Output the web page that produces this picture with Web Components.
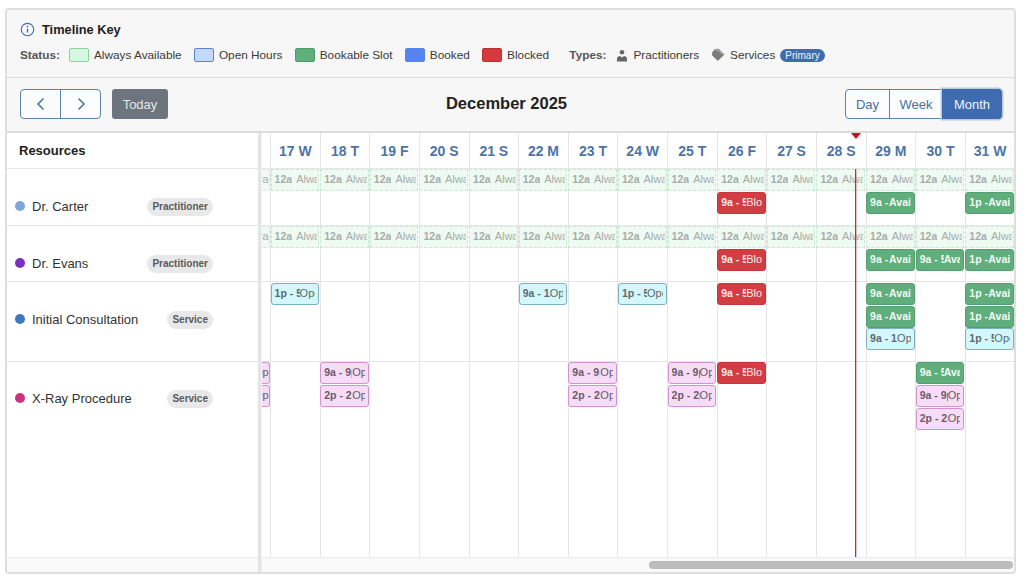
<!DOCTYPE html>
<html lang="en">
<head>
<meta charset="utf-8">
<title>Timeline</title>
<style>
  html, body { margin: 0; height: 100%; background: #fff; overflow: hidden; }
  body { font-family: "Liberation Sans", Arial, sans-serif; color: #2b2b2b; }
</style>
</head>
<body>
<timeline-card>
  <timeline-key></timeline-key>
  <cal-toolbar title="December 2025"></cal-toolbar>
  <resource-grid></resource-grid>
</timeline-card>

<script>
const days = ["", "17 W", "18 T", "19 F", "20 S", "21 S", "22 M", "23 T", "24 W", "25 T", "26 F", "27 S", "28 S", "29 M", "30 T", "31 W"];

// shorthand for the events: [kind, time, title, time box width, align]
const always = ["always", "12a", "Always Available", 0];
const slot = ["green", "9a - 5p", "Available", 19];
const slotPm = ["green", "1p - 5p", "Available", 19];
const slotWide = ["green", "9a - 5p", "Available", 24];
const blocked = ["red", "9a - 5p", "Blocked", 25];
const openAm = ["cyan", "9a - 12p", "Open", 27];
const openPm = ["cyan", "1p - 5:00p", "Open", 25];
const pinkAm = ["pink", "9a - 9p", "Open", 28];
const pinkPm = ["pink", "2p - 2p", "Open", 28];
const allAlways = {};
days.forEach((_, i) => { allAlways[i] = [always]; });
allAlways[0] = [["always", "", "Alwa", 0, "end"]];

const resources = [
  {
    name: "Dr. Carter", type: "Practitioner", dot: "#7fa6dc", height: 57, top: 28,
    events: { ...allAlways, 10: [always, blocked], 13: [always, slot], 15: [always, slotPm] }
  },
  {
    name: "Dr. Evans", type: "Practitioner", dot: "#7a2fc0", height: 56, top: 28,
    events: { ...allAlways, 10: [always, blocked], 13: [always, slot], 14: [always, slotWide], 15: [always, slotPm] }
  },
  {
    name: "Initial Consultation", type: "Service", dot: "#3f78b8", height: 80, top: 28, gap: ".5px",
    events: { 1: [openPm], 6: [openAm], 8: [openPm], 10: [blocked], 13: [slot, slot, openAm], 15: [slotPm, slotPm, openPm] }
  },
  {
    name: "X-Ray Procedure", type: "Service", dot: "#c9327f", height: 196, top: 27, pad: "0",
    events: {
      0: [["pink", "", "Op", 0, "end"], ["pink", "", "Op", 0, "end"]],
      2: [pinkAm, pinkPm], 7: [pinkAm, pinkPm], 9: [pinkAm, pinkPm], 10: [blocked],
      14: [slotWide, pinkAm, pinkPm]
    }
  }
];

class TimelineCard extends HTMLElement {
  constructor() {
    super();
    this.attachShadow({ mode: "open" }).innerHTML = `
      <style>
        :host {
          display: flex;
          flex-direction: column;
          height: 566px;
          margin: 8px 8px 0 5px;
          box-sizing: border-box;
          border: 2px solid #dedede;
          border-radius: 4px;
          overflow: hidden;
          background: #fff;
        }
      </style>
      <slot></slot>`;
  }
}

class LegendItem extends HTMLElement {
  constructor() {
    super();
    this.attachShadow({ mode: "open" }).innerHTML = `
      <style>
        :host { display: flex; align-items: center; gap: 5px; }
        i { width: 20px; height: 14px; box-sizing: border-box; border-radius: 2px; border: 1.5px solid; }
      </style>
      <i></i><slot></slot>`;
  }
  connectedCallback() {
    const i = this.shadowRoot.querySelector("i");
    i.style.background = this.getAttribute("fill");
    i.style.borderColor = this.getAttribute("edge");
  }
}

class TimelineKey extends HTMLElement {
  constructor() {
    super();
    this.attachShadow({ mode: "open" }).innerHTML = `
      <style>
        :host {
          display: block;
          height: 68px;
          flex: none;
          box-sizing: border-box;
          padding: 10px 0 0 13px;
          background: #f7f7f7;
          border-bottom: 1px solid #dcdcdc;
          font-size: 11.8px;
          color: #3a3a3a;
        }
        h4 { display: flex; align-items: center; gap: 7px; margin: 0 0 9px; height: 18px; font-size: 12.8px; color: #222; }
        .row { display: flex; align-items: center; height: 16px; white-space: nowrap; }
        b { font-weight: bold; color: #555; }
        legend-item { margin-right: 12.25px; }
        .status { margin-right: 9px; }
        .types { margin: 0 10px 0 8px; }
        .type { display: flex; align-items: center; gap: 5px; margin-right: 12px; }
        .pill { margin-left: -7px; height: 13px; line-height: 13px; padding: 0 5px; border-radius: 7px; background: #3f6cae; color: #eef3fa; font-size: 10px; }
      </style>
      <h4>
        <svg width="15" height="15" viewBox="0 0 16 16" fill="none" stroke="#3f6cae" stroke-width="1.2">
          <circle cx="8" cy="8" r="6.6"/>
          <path d="M8 7.2v4" stroke-width="1.5"/>
          <circle cx="8" cy="4.9" r=".9" fill="#3f6cae" stroke="none"/>
        </svg>
        Timeline Key
      </h4>
      <div class="row">
        <b class="status">Status:</b>
        <legend-item fill="#d8f7e2" edge="#86d6a0">Always Available</legend-item>
        <legend-item fill="#c4d8f8" edge="#5a84dc">Open Hours</legend-item>
        <legend-item fill="#5fae7c" edge="#4f9a6b">Bookable Slot</legend-item>
        <legend-item fill="#5584ee" edge="#5584ee">Booked</legend-item>
        <legend-item fill="#d6393d" edge="#b93035">Blocked</legend-item>
        <b class="types">Types:</b>
        <span class="type">
          <svg width="12" height="13" viewBox="0 0 12 13" fill="#666">
            <circle cx="6" cy="3.2" r="2.3"/>
            <path d="M1 12.5V9.8C1 8 2.6 7 4 7l2 1.6L8 7c1.400 0 3 1 3 2.800v2.700z"/>
          </svg>
          Practitioners
        </span>
        <span class="type">
          <svg width="14" height="14" viewBox="0 0 14 14">
            <path d="M7.700 .8L13.300 6.400 6.800 13 1 7.200 1.300 4 4 1z" fill="#7c7c7c"/>
            <path d="M4.300 2.200L7.600 2.200 11.800 6.400" fill="none" stroke="#c8c8c8" stroke-width="1"/>
          </svg>
          Services
        </span>
        <span class="pill">Primary</span>
      </div>`;
  }
}

class CalToolbar extends HTMLElement {
  constructor() {
    super();
    this.attachShadow({ mode: "open" }).innerHTML = `
      <style>
        :host {
          display: flex;
          flex: none;
          align-items: center;
          justify-content: space-between;
          height: 55px;
          box-sizing: border-box;
          padding: 0 12px 1px 13px;
          background: #f7f7f7;
          border-bottom: 2px solid #dcdcdc;
        }
        .left { display: flex; gap: 11px; }
        .group { display: flex; height: 30px; box-sizing: border-box; border: 1px solid #5f82ad; border-radius: 4px; background: #fbfcfd; }
        .group span {
          display: flex; align-items: center; justify-content: center;
          font-size: 13px; color: #47709f;
        }
        .group span + span { border-left: 1px solid #5f82ad; }
        .nav span { width: 39px; }
        .today {
          width: 56px; height: 30px; display: flex; align-items: center; justify-content: center;
          border-radius: 3px; background: #6c757d; color: #e4e6e8; font-size: 13px;
        }
        h2 { margin: -1px 0 0; font-size: 16.5px; font-weight: bold; color: #222; }
        .views span:nth-child(1) { width: 43px; }
        .views span:nth-child(2) { width: 52px; }
        .views span.on {
          width: 60px; margin: -1px -1px -1px 0; border: 0; border-radius: 0 4px 4px 0;
          background: #3f6cae; color: #eef3fa; box-shadow: 0 0 0 1.5px #b8c8dd;
        }
      </style>
      <div class="left">
        <div class="group nav">
          <span><svg width="10" height="14" viewBox="0 0 10 14" fill="none" stroke="#47709f" stroke-width="1.5"><path d="M7.500 1.500L2 7l5.500 5.500"/></svg></span>
          <span><svg width="10" height="14" viewBox="0 0 10 14" fill="none" stroke="#47709f" stroke-width="1.5"><path d="M2.500 1.500L8 7l-5.500 5.500"/></svg></span>
        </div>
        <div class="today">Today</div>
      </div>
      <h2></h2>
      <div class="group views">
        <span>Day</span><span>Week</span><span class="on">Month</span>
      </div>`;
  }
  connectedCallback() {
    this.shadowRoot.querySelector("h2").textContent = this.getAttribute("title");
    this.removeAttribute("title");
  }
}

class ResourceLabel extends HTMLElement {
  constructor() {
    super();
    this.attachShadow({ mode: "open" }).innerHTML = `
      <style>
        :host {
          display: flex;
          align-items: flex-start;
          box-sizing: border-box;
          padding: 28px 45px 0 8px;
          border-bottom: 1px solid #e6e6e6;
          font-size: 13px;
          color: #333;
        }
        .in { display: flex; align-items: center; width: 100%; height: 18px; white-space: nowrap; }
        i { width: 10px; height: 10px; border-radius: 50%; margin-right: 7px; flex: none; }
        em {
          margin: 2px 0 0 auto; font-style: normal; font-weight: bold; font-size: 10px; color: #5a5a5a;
          background: #e8e8e8; border-radius: 9px; height: 18px; line-height: 18px; padding: 0 5px;
        }
      </style>
      <div class="in"><i></i><span></span><em></em></div>`;
  }
  connectedCallback() {
    const root = this.shadowRoot;
    root.querySelector("i").style.background = this.getAttribute("dot");
    root.querySelector("span").textContent = this.getAttribute("name");
    root.querySelector("em").textContent = this.getAttribute("type");
    this.style.paddingTop = this.getAttribute("top") + "px";
  }
}

class EventChip extends HTMLElement {
  constructor() {
    super();
    this.attachShadow({ mode: "open" }).innerHTML = `
      <style>
        :host {
          display: block;
          height: 22px;
          box-sizing: border-box;
          margin: 0 .4px var(--chip-gap, 1px) -.4px;
          padding: 0 3px 0 3px;
          border: 1px solid;
          border-radius: 3px;
          white-space: nowrap;
          font-size: 11px;
          line-height: 19px;
          flex: none;
        }
        .in { display: flex; height: 100%; overflow: hidden; }
        :host([kind=always]) { background: #eefaf2; border: 1px dashed #c9e8d3; border-radius: 0; color: #a6ada9; margin-top: -1px; padding-right: 1px; }
        :host([kind=green]) { background: #5fae7c; border-color: #52a06f; color: #f3faf5; }
        :host([kind=green]) .title { font-weight: bold; font-size: 10.5px; }
        :host([kind=red]) { background: #d13d42; border-color: #c7363b; color: #fbeaea; }
        :host([kind=cyan]) { background: #d4f7fc; border-color: #7db1c2; color: #5d6a70; }
        :host([kind=pink]) { background: #f6dcf6; border-color: #cf94cf; color: #6a5a6a; }
        :host([align=end]) { border-left: 0; border-radius: 0 3px 3px 0; padding: 0; margin-left: 0; }
        :host([align=end]) .in { justify-content: flex-end; }
        b { flex: none; overflow: hidden; font-size: 10.5px; }
        :host([kind=always]) b { margin-right: 4px; }
        .title { flex: none; }
      </style>
      <div class="in"><b></b><span class="title"></span></div>`;
  }
  connectedCallback() {
    const root = this.shadowRoot;
    const time = root.querySelector("b");
    time.textContent = this.getAttribute("time");
    const w = this.getAttribute("time-width");
    if (w && w !== "0") time.style.width = w + "px";
    root.querySelector(".title").textContent = this.getAttribute("label");
  }
}

class DayRow extends HTMLElement {
  constructor() {
    super();
    this.attachShadow({ mode: "open" }).innerHTML = `
      <style>
        :host {
          display: grid;
          grid-template-columns: 9px repeat(15, 49.63px);
          box-sizing: border-box;
          border-bottom: 1px solid #e6e6e6;
        }
        div {
          display: flex;
          flex-direction: column;
          min-width: 0;
          box-sizing: border-box;
          border-right: 1px solid #e6e6e6;
          padding-top: var(--cell-pad, 1px);
        }
      </style>`;
  }
  setEvents(events) {
    days.forEach((_, i) => {
      const cell = document.createElement("div");
      (events[i] || []).forEach(([kind, time, label, w, align]) => {
        const chip = document.createElement("event-chip");
        chip.setAttribute("kind", kind);
        chip.setAttribute("time", time);
        chip.setAttribute("label", label);
        chip.setAttribute("time-width", w);
        if (align) chip.setAttribute("align", align);
        cell.appendChild(chip);
      });
      this.shadowRoot.appendChild(cell);
    });
  }
}

class ResourceGrid extends HTMLElement {
  constructor() {
    super();
    const rows = resources.map(r => r.height + "px").join(" ");
    this.attachShadow({ mode: "open" }).innerHTML = `
      <style>
        :host {
          display: grid;
          flex: 1;
          min-height: 0;
          grid-template-columns: 251px 4px 1fr;
          grid-template-rows: 36px ${rows} 1fr;
          position: relative;
          overflow: hidden;
          background: #fff;
        }
        .res {
          display: flex; align-items: center; padding-left: 12px; box-sizing: border-box;
          font-size: 13px; font-weight: bold; color: #222; border-bottom: 1px solid #e6e6e6;
        }
        .split { grid-column: 2; grid-row: 1 / -1; background: #e4e4e4; border-right: 1px solid #f2f2f2; }
        .head { display: grid; grid-template-columns: 9px repeat(15, 49.63px); border-bottom: 1px solid #e6e6e6; box-sizing: border-box; }
        .head span {
          display: flex; align-items: center; justify-content: center;
          border-right: 1px solid #e6e6e6; overflow: hidden;
          font-size: 14px; font-weight: bold; color: #4d74a6; white-space: nowrap;
        }
        .foot { background: #f9f9f9; border-top: 1px solid #ececec; margin-top: -1px; }
        .bar { display: flex; align-items: center; padding: 0 2px 0 387px; }
        .thumb { flex: 1; height: 8px; border-radius: 4px; background: #bcbcbc; }
        .now {
          position: absolute; left: 848px; top: 36px; bottom: 15px; width: 1px;
          background: #bb2f3a; box-shadow: 1px 0 0 rgba(187, 47, 58, .3);
        }
        .tip {
          position: absolute; left: 844px; top: 0; width: 0; height: 0;
          border: 5px solid transparent; border-top: 6px solid #c5121c; border-bottom: 0;
        }
      </style>
      <div class="res">Resources</div>
      <div class="split"></div>
      <div class="head">${days.map(d => `<span>${d}</span>`).join("")}</div>
      <div class="foot"></div>
      <div class="foot bar"><div class="thumb"></div></div>
      <div class="now"></div>
      <div class="tip"></div>`;
    const root = this.shadowRoot;
    const foot = root.querySelector(".foot");
    resources.forEach(r => {
      const label = document.createElement("resource-label");
      label.setAttribute("name", r.name);
      label.setAttribute("type", r.type);
      label.setAttribute("dot", r.dot);
      label.setAttribute("top", r.top);
      const row = document.createElement("day-row");
      if (r.gap) row.style.setProperty("--chip-gap", r.gap);
      if (r.pad) row.style.setProperty("--cell-pad", r.pad);
      root.insertBefore(label, foot);
      root.insertBefore(row, foot);
      row.setEvents(r.events);
    });
    // the splitter fills its own column, labels and rows fall in columns 1 and 3
    root.querySelectorAll("resource-label, .foot:not(.bar)").forEach(el => { el.style.gridColumn = "1"; });
    root.querySelectorAll("day-row, .foot.bar").forEach(el => { el.style.gridColumn = "3"; });
  }
}

customElements.define("legend-item", LegendItem);
customElements.define("timeline-key", TimelineKey);
customElements.define("cal-toolbar", CalToolbar);
customElements.define("resource-label", ResourceLabel);
customElements.define("event-chip", EventChip);
customElements.define("day-row", DayRow);
customElements.define("resource-grid", ResourceGrid);
customElements.define("timeline-card", TimelineCard);
</script>
</body>
</html>
